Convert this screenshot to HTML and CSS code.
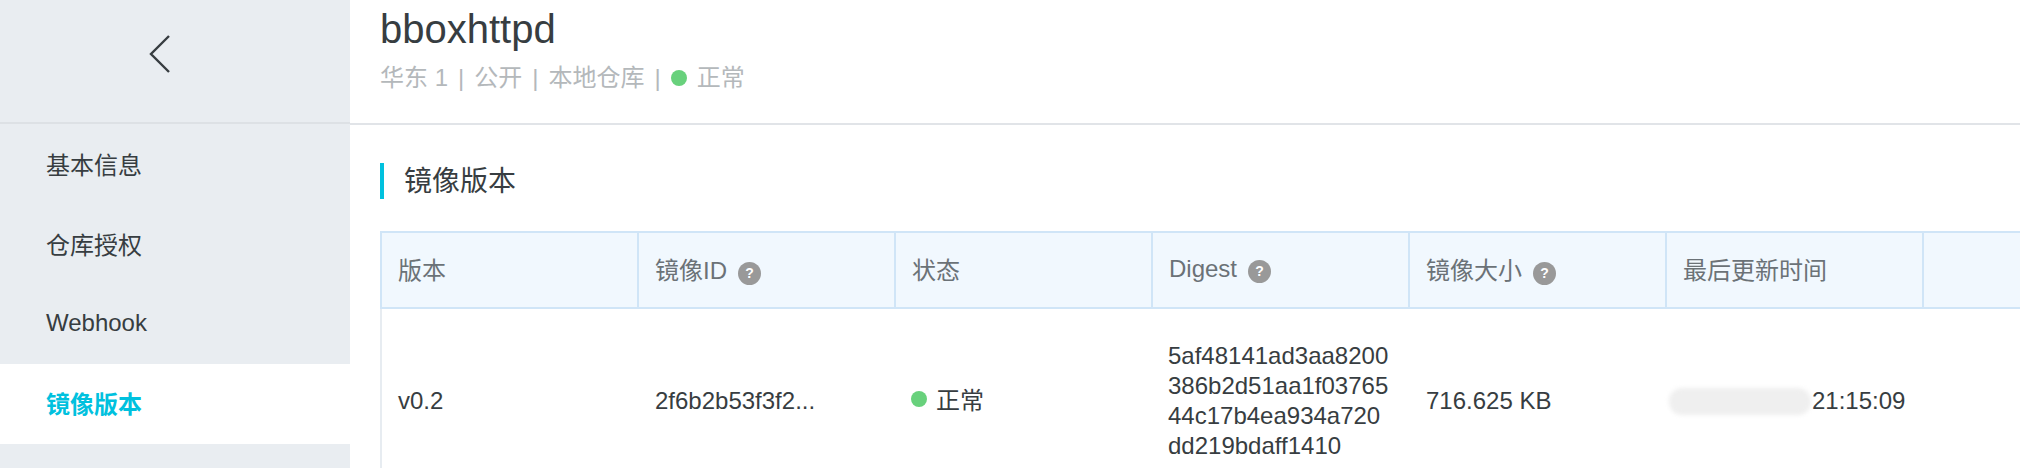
FILE: index.html
```html
<!DOCTYPE html>
<html lang="zh">
<head>
<meta charset="utf-8">
<title>bboxhttpd</title>
<link rel="stylesheet" href="styles.css">
</head>
<body>
<div class="page">
  <aside class="side">
    <div class="back">
      <svg class="chev" width="24" height="40" viewBox="0 0 24 40"><path d="M21 2 3 20l18 18" fill="none" stroke="#373d41" stroke-width="2.4"/></svg>
    </div>
    <nav class="menu">
      <a class="item">基本信息</a>
      <a class="item">仓库授权</a>
      <a class="item">Webhook</a>
      <a class="item active">镜像版本</a>
    </nav>
  </aside>
  <main class="main">
    <header class="head">
      <h1 class="title">bboxhttpd</h1>
      <div class="meta">华东 1<span class="sep">|</span>公开<span class="sep">|</span>本地仓库<span class="sep">|</span><i class="dot"></i>正常</div>
    </header>
    <section class="content">
      <h2 class="section">镜像版本</h2>
      <table class="grid">
        <thead>
          <tr>
            <th>版本</th>
            <th>镜像ID<i class="help">?</i></th>
            <th>状态</th>
            <th>Digest<i class="help">?</i></th>
            <th>镜像大小<i class="help">?</i></th>
            <th>最后更新时间</th>
            <th></th>
          </tr>
        </thead>
        <tbody>
          <tr>
            <td>v0.2</td>
            <td>2f6b2b53f3f2...</td>
            <td><i class="dot"></i>正常</td>
            <td class="digest">5af48141ad3aa8200386b2d51aa1f0376544c17b4ea934a720dd219bdaff1410</td>
            <td>716.625 KB</td>
            <td><span class="blur"></span>21:15:09</td>
            <td></td>
          </tr>
        </tbody>
      </table>
    </section>
  </main>
</div>
</body>
</html>
```
FILE: styles.css
```css
* { box-sizing: border-box; }
html, body { margin: 0; height: 468px; overflow: hidden; background: #fff; }
body { font-family: "Liberation Sans", "Noto Sans CJK SC", sans-serif; color: #373d41; }
.page { display: flex; height: 468px; overflow: hidden; }
.side { width: 350px; flex: none; background: #e9edf1; }
.back { height: 124px; border-bottom: 2px solid #dde1e5; display: flex; align-items: flex-start; justify-content: flex-start; padding: 34px 0 0 148px; }
.menu { display: flex; flex-direction: column; }
.item { height: 80px; display: flex; align-items: center; padding: 0 0 2px 46px; font-size: 24px; color: #373d41; }
.item.active { background: #fff; color: #00c1de; font-weight: 700; padding-bottom: 4px; }
.main { flex: 1; min-width: 0; overflow: hidden; }
.head { height: 125px; border-bottom: 2px solid #e1e4e8; padding: 6px 0 0 30px; }
.title { margin: 0; font-size: 40px; line-height: 46px; font-weight: 400; color: #373d41; }
.meta { margin-top: 10px; font-size: 24px; line-height: 32px; color: #b4b8bb; display: flex; align-items: center; }
.meta .dot { margin-right: 10px; }
.sep { margin: 0 10px; }
.dot { display: inline-block; width: 16px; height: 16px; border-radius: 50%; background: #68d17c; margin-right: 9px; }
.content { padding: 38px 0 0 30px; }
.section { margin: 0; height: 36px; border-left: 4px solid #00c1de; padding-left: 20px; font-size: 28px; line-height: 38px; font-weight: 400; color: #373d41; }
.grid { margin-top: 32px; table-layout: fixed; width: 1800px; border-collapse: collapse; font-size: 24px; }
.grid th, .grid td { width: 257px; padding: 0 16px; text-align: left; font-weight: 400; }
.grid th { height: 76px; padding-bottom: 3px; background: #f1f8fe; border: 2px solid #d0e5f7; color: #6b7277; }
.grid td { height: 184px; line-height: 30px; color: #373d41; border-left: 2px solid transparent; }
.grid td:first-child { border-left-color: #e7ecf1; }
.grid td .dot { vertical-align: 2px; margin-left: -1px; }
.digest { word-break: break-all; padding-left: 15px !important; }
.help { display: inline-block; width: 23px; height: 23px; margin-left: 11px; border-radius: 50%; background: #999; color: #fff; font: 700 14px/23px "Liberation Sans", sans-serif; text-align: center; vertical-align: 1px; }
.blur { display: inline-block; width: 142px; height: 27px; margin: 0 1px 0 -14px; border-radius: 13px; background: #efefef; filter: blur(2px); vertical-align: -6px; }
```
